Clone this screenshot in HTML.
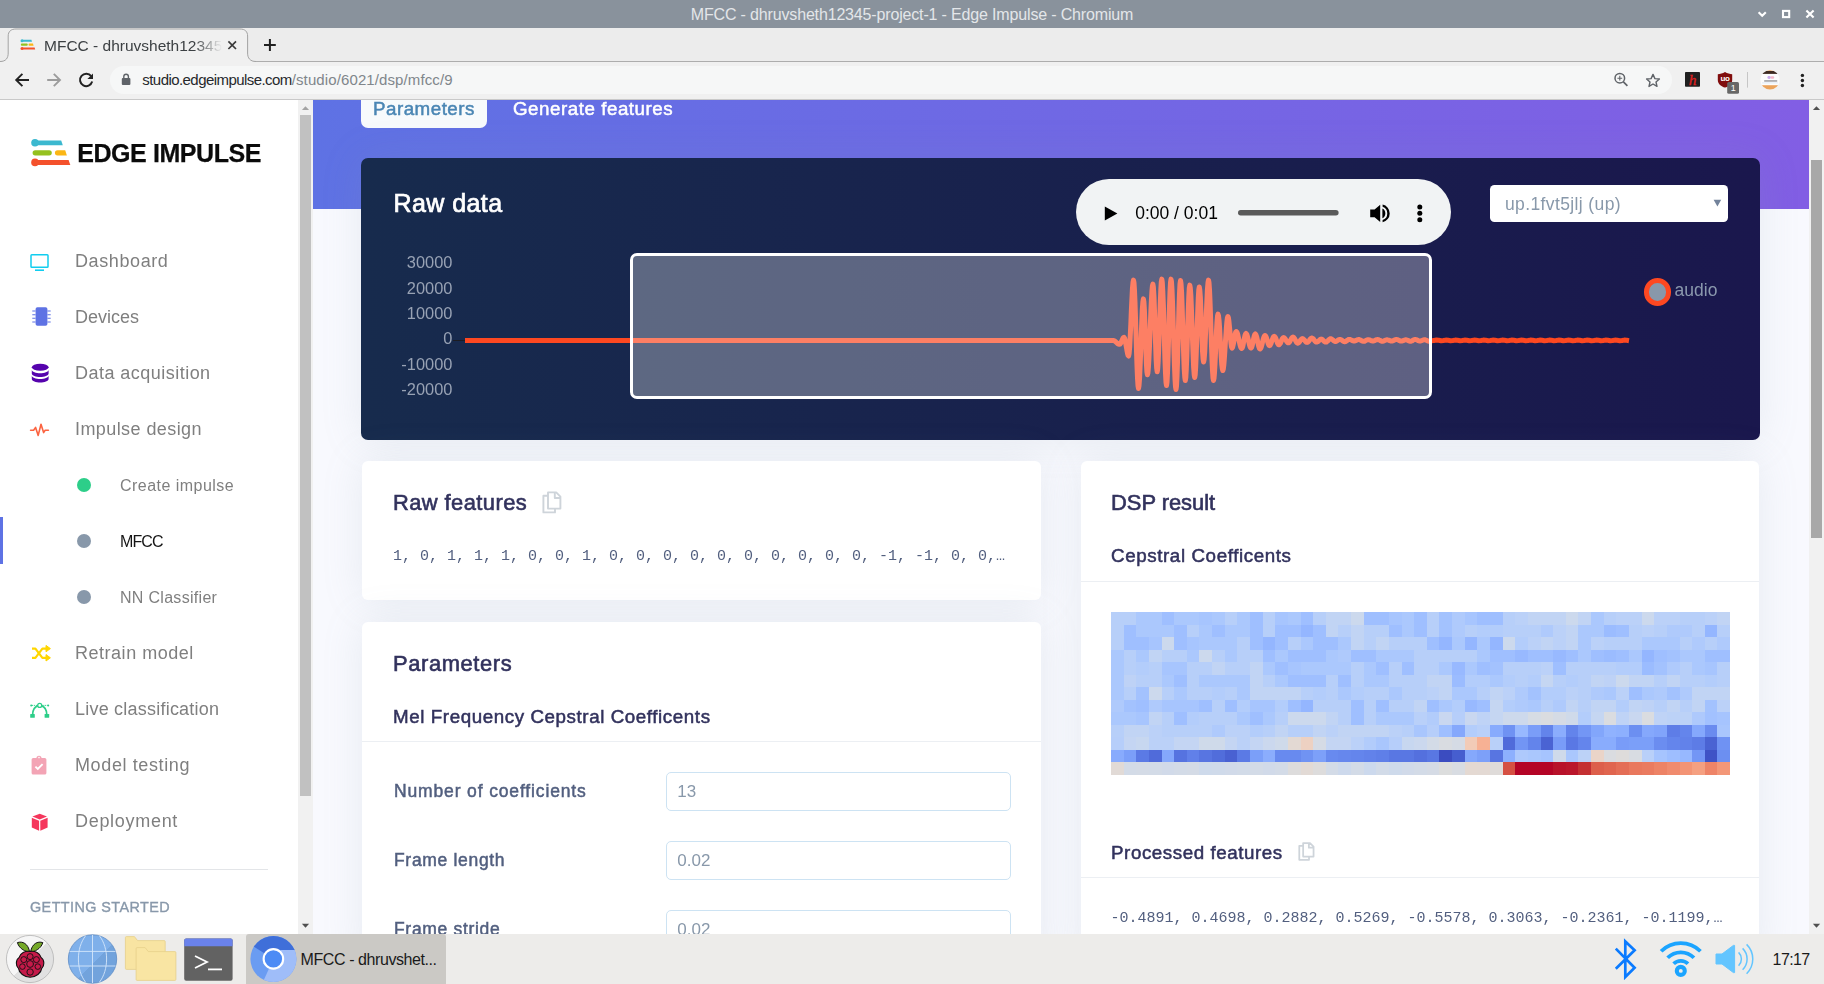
<!DOCTYPE html>
<html lang="en">
<head>
<meta charset="utf-8">
<title>MFCC - dhruvsheth12345-project-1 - Edge Impulse - Chromium</title>
<style>
*{box-sizing:border-box;margin:0;padding:0}
html,body{width:1824px;height:984px;overflow:hidden;background:#f4f5fa;font-family:"Liberation Sans",sans-serif;}
.abs{position:absolute}
#root{position:relative;width:1824px;height:984px;overflow:hidden}
/* ---------- window chrome ---------- */
#titlebar{left:0;top:0;width:1824px;height:28px;background:#89929c;color:#e3e6e9;font-size:16px;letter-spacing:-0.16px;line-height:29px;text-align:center}
#tabstrip{left:0;top:28px;width:1824px;height:34px;background:#ececec;border-bottom:1px solid #adadad}
#toolbar{left:0;top:62px;width:1824px;height:38px;background:#f0f0f0;border-bottom:1px solid #c9c9c9}
#urlpill{left:110px;top:66px;width:1562px;height:28px;border-radius:14px;background:#f6f7f7}
.chrometxt{font-size:16px;color:#3c4043;white-space:nowrap}
/* ---------- page ---------- */
#sidebar{left:0;top:100px;width:298px;height:834px;background:#fff;overflow:hidden}
#sidebar,#main{will-change:transform}
#sbscroll{left:298px;top:100px;width:15px;height:834px;background:#f1f1f1}
#main{left:313px;top:100px;width:1496px;height:834px;background:#f8f9fe;overflow:hidden}
#mainscroll{left:1809px;top:100px;width:15px;height:834px;background:#f1f1f1}
#hero{left:0;top:0;width:1496px;height:109px;background:linear-gradient(87deg,#5e72e4 0,#825ee4 100%)}
.os{font-family:"Liberation Sans",sans-serif}
.navitem{left:75px;font-size:18px;color:#7f7f7f;white-space:nowrap;line-height:22px}
.subitem{left:120px;font-size:16px;color:#7f7f7f;white-space:nowrap;line-height:20px}
.dot{left:77px;width:14px;height:14px;border-radius:50%;background:#8898aa}
.card{background:#fff;border-radius:6px;box-shadow:0 0 40px 0 rgba(136,152,170,.15)}
.h2{font-size:21.9px;color:#32325d;-webkit-text-stroke:0.62px #32325d;white-space:nowrap;line-height:26px}
.h3{font-size:18.75px;color:#32325d;-webkit-text-stroke:0.52px #32325d;white-space:nowrap;line-height:22px}
.mono{font-family:"Liberation Mono",monospace;font-size:15px;color:#525f7f;white-space:nowrap;line-height:18px}
.lbl{font-size:17.5px;font-weight:normal;color:#525f7f;-webkit-text-stroke:0.5px #525f7f;white-space:nowrap;line-height:22px}
.inp{width:344.6px;height:39px;border:1px solid #cde3f3;border-radius:5px;background:#fff;color:#8898aa;font-size:17px;line-height:37px;padding-left:10px}
.hr{height:1px;background:#eceff3}
.ylab{width:70px;text-align:right;font-size:16.4px;color:#98a2b4;line-height:18px}
/* ---------- taskbar ---------- */
#taskbar{left:0;top:934px;width:1824px;height:50px;background:#edecea}
</style>
</head>
<body>
<div id="root">

<!-- PAGE: SIDEBAR -->
<div id="sidebar" class="abs">
<!-- logo -->
<svg class="abs" style="left:28px;top:36px" width="46" height="34" viewBox="28 136 46 34">
  <path d="M35 140.4 H61.2 L62.8 145.2 H35 Z" fill="#3bb8cf"/><circle cx="35" cy="142.8" r="3.8" fill="#3bb8cf"/>
  <rect x="32.6" y="150.2" width="19.2" height="5.2" rx="2.6" fill="#95c11f"/>
  <path d="M57.5 150.2 H65.2 L66.9 155.4 H57.5 A2.6 2.6 0 0 1 57.5 150.2 Z" fill="#fbb615"/>
  <path d="M35 160 H68.6 L70.3 165 H35 Z" fill="#f4512c"/><circle cx="35" cy="162.4" r="3.8" fill="#f4512c"/>
</svg>
<div class="abs" style="left:77.2px;top:38.7px;font-size:25px;font-weight:bold;color:#0b0b0b;-webkit-text-stroke:0.25px #0b0b0b;letter-spacing:-0.42px;line-height:28px;white-space:nowrap">EDGE IMPULSE</div>

<!-- nav icons -->
<svg class="abs" style="left:28px;top:150px" width="26" height="24" viewBox="28 250 26 24" fill="none" stroke="#11cdef" stroke-width="1.5">
  <rect x="31" y="254.7" width="17" height="12.6" rx="0.8"/><path d="M35 270.2 H44" stroke-width="1.6"/>
</svg>
<svg class="abs" style="left:28px;top:204px" width="26" height="26" viewBox="28 304 26 26">
  <rect x="35.6" y="307.2" width="11.8" height="18.6" rx="1.8" fill="#5e72e4"/>
  <g stroke="#5e72e4" stroke-width="1.1"><path d="M32.3 311H35.6M32.3 314.7H35.6M32.3 318.3H35.6M32.3 322H35.6M47.4 311H50.7M47.4 314.7H50.7M47.4 318.3H50.7M47.4 322H50.7"/></g>
</svg>
<svg class="abs" style="left:28px;top:260px" width="26" height="26" viewBox="28 360 26 26" fill="#5603ad">
  <ellipse cx="40.2" cy="367.2" rx="8.4" ry="3.5"/>
  <path d="M31.8 369.8 C31.8 374.4 48.6 374.4 48.6 369.8 V373.6 C48.6 378.2 31.8 378.2 31.8 373.6 Z"/>
  <path d="M31.8 375.6 C31.8 380.2 48.6 380.2 48.6 375.6 V379 C48.6 383.6 31.8 383.6 31.8 379 Z"/>
</svg>
<svg class="abs" style="left:28px;top:318px" width="26" height="24" viewBox="28 418 26 24" fill="none" stroke="#fb6340" stroke-width="1.6" stroke-linejoin="round" stroke-linecap="round">
  <path d="M30.6 430.2 H33.6 L35.6 427.4 L38.2 435.4 L41 424.2 L43.6 432.6 L45.2 430.2 H48.4"/>
</svg>
<!-- retrain (shuffle) -->
<svg class="abs" style="left:28px;top:542px" width="26" height="24" viewBox="28 642 26 24" fill="none" stroke="#ffd600" stroke-width="2.2" stroke-linejoin="round">
  <path d="M32 648.6 H35.4 L42.4 657.8 H47"/><path d="M32 657.8 H35.4 L42.4 648.6 H47"/>
  <path d="M46 645.4 L50.4 648.6 L46 651.8 Z" fill="#ffd600" stroke-width="1"/><path d="M46 654.6 L50.4 657.8 L46 661 Z" fill="#ffd600" stroke-width="1"/>
</svg>
<!-- live (bezier) -->
<svg class="abs" style="left:28px;top:600px" width="26" height="24" viewBox="28 700 26 24" fill="none" stroke="#2dce89">
  <path d="M32.6 715 C32.6 709 35.6 706.4 38 705.6 M41.4 705.6 C43.8 706.4 46.8 709 46.8 715" stroke-width="1.7"/>
  <circle cx="39.7" cy="705.4" r="2" stroke-width="1.3"/>
  <rect x="30.2" y="714" width="4.6" height="3.8" rx="0.6" fill="#2dce89" stroke="none"/><rect x="44.6" y="714" width="4.6" height="3.8" rx="0.6" fill="#2dce89" stroke="none"/>
  <path d="M31.6 705.4 H37 M42.4 705.4 H47.8" stroke-width="0.9" stroke-dasharray="1.4 0.8"/>
  <circle cx="31.2" cy="705.4" r="1" fill="#2dce89" stroke="none"/><circle cx="48.2" cy="705.4" r="1" fill="#2dce89" stroke="none"/>
</svg>
<!-- model testing (clipboard check) -->
<svg class="abs" style="left:28px;top:652px" width="26" height="26" viewBox="28 752 26 26">
  <path d="M33.2 758 H44.8 A1.6 1.6 0 0 1 46.4 759.6 V773 A1.6 1.6 0 0 1 44.8 774.6 H33.2 A1.6 1.6 0 0 1 31.6 773 V759.6 A1.6 1.6 0 0 1 33.2 758 Z" fill="#f3a4b5"/>
  <path d="M36.4 758.4 A2.6 2.6 0 0 1 41.6 758.4 Z" fill="#f3a4b5"/><circle cx="39" cy="757.6" r="0.8" fill="#fff"/>
  <path d="M35.4 766.6 L37.8 769 L42.6 764.2" fill="none" stroke="#fff" stroke-width="1.9"/>
</svg>
<!-- deployment (cube) -->
<svg class="abs" style="left:28px;top:710px" width="26" height="26" viewBox="28 810 26 26" fill="#f5365c">
  <path d="M39.7 813.8 L47 816.6 L39.7 819.6 L32.4 816.6 Z"/>
  <path d="M31.8 817.8 L39.1 820.8 V830.8 L31.8 827.6 Z"/>
  <path d="M47.6 817.8 L40.3 820.8 V830.8 L47.6 827.6 Z"/>
</svg>

<div class="abs navitem" style="top:150px;letter-spacing:0.6px">Dashboard</div>
<div class="abs navitem" style="top:206px;letter-spacing:0px">Devices</div>
<div class="abs navitem" style="top:262px;letter-spacing:0.47px">Data acquisition</div>
<div class="abs navitem" style="top:318px;letter-spacing:0.42px">Impulse design</div>

<div class="abs dot" style="top:378px;background:#2dce89"></div>
<div class="abs subitem" style="top:376px;letter-spacing:0.47px">Create impulse</div>
<div class="abs" style="left:0;top:417px;width:3px;height:47px;background:#5e72e4"></div>
<div class="abs dot" style="top:434px"></div>
<div class="abs subitem" style="top:432px;color:#151515;letter-spacing:-0.9px">MFCC</div>
<div class="abs dot" style="top:490px"></div>
<div class="abs subitem" style="top:488px;letter-spacing:0.3px">NN Classifier</div>

<div class="abs navitem" style="top:542px;letter-spacing:0.52px">Retrain model</div>
<div class="abs navitem" style="top:597.6px;letter-spacing:0.22px">Live classification</div>
<div class="abs navitem" style="top:654px;letter-spacing:0.62px">Model testing</div>
<div class="abs navitem" style="top:710px;letter-spacing:0.7px">Deployment</div>

<div class="abs" style="left:30px;top:769px;width:238px;height:1px;background:#e3e5e8"></div>
<div class="abs" style="left:30px;top:798.6px;font-size:14.4px;color:#8898aa;-webkit-text-stroke:0.35px #8898aa;letter-spacing:0.42px;line-height:16px;white-space:nowrap">GETTING STARTED</div>
<!--SIDEBAR-END-->
</div>
<div id="sbscroll" class="abs">

<div class="abs" style="left:2px;top:15px;width:11px;height:681px;background:#c1c1c1"></div>
<svg class="abs" style="left:0;top:0" width="15" height="834" viewBox="0 0 15 834"><path d="M3.9 10 L7.5 6.2 L11.1 10 Z" fill="#a3a3a3"/><path d="M3.9 823.8 L7.5 827.8 L11.1 823.8 Z" fill="#505050"/></svg>

</div>

<!-- PAGE: MAIN -->
<div id="main" class="abs">
<div id="hero" class="abs"></div>

<!-- tabs -->
<div class="abs" style="left:48px;top:-8px;width:126px;height:36px;background:#f7fafc;border-radius:7px"></div>
<div class="abs" style="left:60px;top:-1.8px;font-size:18.75px;color:#4a86b4;-webkit-text-stroke:0.5px #4a86b4;letter-spacing:0.5px;line-height:22px;white-space:nowrap">Parameters</div>
<div class="abs" style="left:200px;top:-2px;font-size:18.75px;color:#fff;-webkit-text-stroke:0.5px #fff;letter-spacing:0.535px;line-height:22px;white-space:nowrap">Generate features</div>

<!-- raw data card -->
<div id="rawcard" class="abs" style="left:48px;top:58px;width:1399px;height:282px;border-radius:7px;background:linear-gradient(87deg,#172b4d 0,#1a174d 100%);overflow:hidden;box-shadow:0 0 40px 0 rgba(136,152,170,.15)">
  <div class="abs" style="left:32.5px;top:30px;font-size:25px;color:#fff;-webkit-text-stroke:0.7px #fff;letter-spacing:0.43px;line-height:30px;white-space:nowrap">Raw data</div>
  <!-- audio player -->
  <div class="abs" style="left:714.7px;top:21.2px;width:375.3px;height:66.3px;border-radius:34px;background:#f1f3f4"></div>
  <svg class="abs" style="left:714px;top:21px" width="377" height="67" viewBox="1075 179 377 67">
    <path d="M1104.8 206.6 L1117.4 213.4 L1104.8 220.4 Z" fill="#000"/>
    <rect x="1238" y="210" width="100.6" height="5.4" rx="2.7" fill="#5a5a5a"/>
    <path d="M1370.2 209.6 H1374.6 L1380.2 204.8 V222 L1374.6 217.2 H1370.2 Z" fill="#000"/>
    <path d="M1382.4 208.6 A5.4 5.4 0 0 1 1382.4 218.2 Z" fill="#000"/>
    <path d="M1382.6 204.6 A9 9 0 0 1 1382.6 222.2 V220 A7 7 0 0 0 1382.6 206.8 Z" fill="#000"/>
    <circle cx="1419.8" cy="206.9" r="2.5" fill="#000"/><circle cx="1419.8" cy="213.3" r="2.5" fill="#000"/><circle cx="1419.8" cy="219.7" r="2.5" fill="#000"/>
  </svg>
  <div class="abs" style="left:774.2px;top:44.7px;font-size:17.5px;color:#000;line-height:20px;white-space:nowrap">0:00 / 0:01</div>
  <!-- select -->
  <div class="abs" style="left:1128.9px;top:26.8px;width:238.2px;height:37.3px;border-radius:4.5px;background:#fff"></div>
  <div class="abs" style="left:1144px;top:35.8px;font-size:17.5px;color:#8898aa;letter-spacing:0.38px;line-height:20px;white-space:nowrap">up.1fvt5jlj (up)</div>
  <svg class="abs" style="left:1351px;top:40px" width="12" height="10" viewBox="0 0 12 10"><path d="M1.6 1.8 H9.2 L5.4 8.6 Z" fill="#73839b"/></svg>
  <!-- y labels -->
  <div class="abs ylab" style="left:21.4px;top:94.7px">30000</div>
  <div class="abs ylab" style="left:21.4px;top:120.5px">20000</div>
  <div class="abs ylab" style="left:21.4px;top:145.8px">10000</div>
  <div class="abs ylab" style="left:21.4px;top:170.5px">0</div>
  <div class="abs ylab" style="left:21.4px;top:196.7px">-10000</div>
  <div class="abs ylab" style="left:21.4px;top:221.7px">-20000</div>
  <div class="abs" style="left:92px;top:181.6px;width:12px;height:1.4px;background:#1c1c22"></div>
  <!-- waveform -->
  <svg class="abs" style="left:0;top:0" width="1399" height="282" viewBox="0 0 1399 282">
    <path d="M104.0,182.4 752.0,182.4 752.5,182.5 753.0,182.6 753.5,182.9 754.0,183.2 754.5,183.7 755.0,184.1 755.5,184.6 756.0,185.0 756.5,185.5 757.0,185.8 757.5,186.1 758.0,186.2 758.5,186.3 759.0,186.1 759.5,185.5 760.0,184.6 760.5,183.4 761.0,182.3 761.5,181.1 762.0,180.2 762.5,179.6 763.0,179.4 763.5,180.0 764.0,181.6 764.5,184.0 765.0,187.1 765.6,190.3 766.1,193.3 766.6,195.8 767.1,197.4 767.6,198.0 768.1,195.7 768.7,189.1 769.2,179.0 769.8,166.6 770.3,153.5 770.9,141.1 771.4,131.0 772.0,124.4 772.5,122.1 773.0,124.8 773.5,132.5 774.0,144.4 774.5,159.6 775.0,176.3 775.5,193.0 776.0,208.2 776.5,220.1 777.0,227.8 777.5,230.5 778.0,227.8 778.6,220.0 779.1,208.1 779.7,193.5 780.2,177.9 780.8,163.3 781.3,151.4 781.9,143.6 782.4,140.9 782.9,143.8 783.4,152.0 783.9,164.3 784.4,178.8 784.9,193.4 785.4,205.7 785.9,213.9 786.4,216.8 786.9,215.0 787.4,209.6 787.9,201.1 788.4,190.3 788.9,177.9 789.4,165.0 789.9,152.6 790.4,141.8 790.9,133.3 791.4,127.9 791.9,126.1 792.4,129.4 793.0,138.9 793.5,153.2 794.1,169.9 794.6,186.7 795.1,201.0 795.7,210.5 796.2,213.8 796.7,211.0 797.2,203.0 797.7,190.6 798.2,175.5 798.8,159.4 799.3,144.3 799.8,131.9 800.3,123.9 800.8,121.1 801.3,124.3 801.8,133.5 802.4,147.7 802.9,165.1 803.4,183.5 803.9,200.9 804.5,215.1 805.0,224.3 805.5,227.5 806.0,224.3 806.5,215.1 807.0,200.9 807.5,183.5 808.0,165.1 808.5,147.7 809.0,133.5 809.5,124.3 810.0,121.1 810.5,123.8 811.0,131.6 811.5,143.9 812.0,159.2 812.5,176.3 813.0,193.4 813.5,208.7 814.0,221.0 814.5,228.8 815.0,231.5 815.5,228.2 816.0,218.7 816.5,204.2 817.0,186.5 817.5,167.5 818.0,149.8 818.5,135.3 819.0,125.8 819.5,122.5 820.0,125.5 820.6,134.2 821.1,147.5 821.6,163.8 822.2,181.2 822.7,197.5 823.2,210.8 823.8,219.5 824.3,222.5 824.8,219.6 825.3,211.3 825.8,198.7 826.3,183.1 826.8,166.5 827.3,151.0 827.8,138.3 828.3,130.0 828.8,127.1 829.3,129.9 829.9,137.9 830.4,150.2 831.0,165.3 831.5,181.3 832.1,196.4 832.6,208.7 833.2,216.7 833.7,219.5 834.2,216.8 834.7,208.9 835.2,196.9 835.7,182.1 836.3,166.4 836.8,151.6 837.3,139.6 837.8,131.7 838.3,129.0 838.8,131.9 839.4,140.0 839.9,152.1 840.4,166.5 841.0,180.9 841.5,193.0 842.1,201.1 842.6,204.0 843.1,201.5 843.7,194.4 844.2,183.5 844.8,170.2 845.3,155.9 845.9,142.6 846.4,131.7 847.0,124.6 847.5,122.1 848.0,124.6 848.5,131.7 849.0,142.8 849.5,156.8 850.0,172.3 850.5,187.8 851.0,201.8 851.5,212.9 852.0,220.0 852.5,222.5 853.0,220.5 853.5,214.7 854.0,205.9 854.5,195.1 855.0,183.5 855.5,172.7 856.0,163.9 856.5,158.1 857.0,156.1 857.5,157.8 858.1,162.7 858.6,170.2 859.1,179.4 859.7,189.2 860.2,198.4 860.7,205.9 861.3,210.8 861.8,212.5 862.3,211.2 862.8,207.3 863.3,201.4 863.8,193.8 864.3,185.5 864.9,177.2 865.4,169.6 865.9,163.7 866.4,159.8 866.9,158.5 867.4,159.7 867.9,163.1 868.4,168.3 869.0,174.3 869.5,180.3 870.0,185.5 870.5,188.9 871.0,190.1 871.5,189.5 872.0,187.7 872.6,185.0 873.1,181.8 873.6,178.6 874.2,175.9 874.7,174.1 875.2,173.5 875.7,173.8 876.2,174.8 876.7,176.4 877.2,178.5 877.7,180.8 878.2,183.2 878.7,185.5 879.2,187.6 879.7,189.2 880.2,190.2 880.7,190.5 881.2,189.9 881.8,188.3 882.3,185.9 882.8,183.0 883.4,180.1 883.9,177.7 884.5,176.1 885.0,175.5 885.5,175.9 886.0,176.9 886.5,178.5 887.0,180.5 887.5,182.8 888.0,185.0 888.5,187.0 889.0,188.6 889.5,189.6 890.0,190.0 890.5,189.5 891.1,187.9 891.6,185.7 892.2,183.0 892.7,180.3 893.2,178.1 893.8,176.5 894.3,176.0 894.8,176.5 895.3,177.8 895.9,179.8 896.4,182.2 896.9,184.8 897.4,187.2 898.0,189.2 898.5,190.5 899.0,191.0 899.5,190.7 900.0,189.7 900.5,188.2 901.0,186.3 901.5,184.2 902.0,182.2 902.5,180.3 903.0,178.8 903.5,177.8 904.0,177.5 904.5,177.8 905.0,178.7 905.5,180.0 906.0,181.7 906.5,183.4 907.0,185.1 907.5,186.4 908.0,187.3 908.5,187.6 909.0,187.3 909.5,186.5 910.1,185.3 910.6,183.8 911.1,182.2 911.6,180.7 912.2,179.4 912.7,178.6 913.2,178.3 913.7,178.6 914.2,179.3 914.8,180.4 915.3,181.8 915.8,183.3 916.3,184.7 916.9,185.8 917.4,186.5 917.9,186.8 918.4,186.5 918.9,185.9 919.5,185.0 920.0,183.8 920.5,182.5 921.0,181.4 921.6,180.4 922.1,179.8 922.6,179.6 923.1,179.7 923.6,180.2 924.2,180.9 924.7,181.7 925.2,182.7 925.7,183.5 926.3,184.2 926.8,184.7 927.3,184.8 927.8,184.7 928.3,184.2 928.9,183.4 929.4,182.5 929.9,181.5 930.4,180.6 931.0,179.8 931.5,179.3 932.0,179.1 932.5,179.3 933.0,179.8 933.6,180.7 934.1,181.6 934.6,182.7 935.1,183.7 935.7,184.5 936.2,185.0 936.7,185.2 937.2,185.1 937.7,184.7 938.3,184.1 938.8,183.3 939.3,182.5 939.8,181.8 940.4,181.2 940.9,180.8 941.4,180.6 941.9,180.7 942.4,181.1 943.0,181.6 943.5,182.2 944.0,182.9 944.5,183.5 945.1,184.0 945.6,184.3 946.1,184.4 946.6,184.3 947.1,183.9 947.7,183.3 948.2,182.6 948.7,181.8 949.2,181.1 949.8,180.5 950.3,180.1 950.8,180.0 951.3,180.1 951.8,180.5 952.4,181.0 952.9,181.7 953.4,182.4 953.9,183.1 954.5,183.6 955.0,184.0 955.5,184.1 956.0,184.0 956.5,183.8 957.1,183.4 957.6,182.9 958.1,182.4 958.6,181.9 959.2,181.5 959.7,181.2 960.2,181.1 960.7,181.2 961.2,181.5 961.8,181.9 962.3,182.4 962.8,182.9 963.3,183.4 963.9,183.7 964.4,184.0 964.9,184.1 965.4,184.0 965.9,183.7 966.5,183.2 967.0,182.7 967.5,182.1 968.0,181.6 968.6,181.1 969.1,180.8 969.6,180.7 970.1,180.8 970.6,181.1 971.2,181.4 971.7,181.9 972.2,182.3 972.7,182.8 973.3,183.1 973.8,183.4 974.3,183.4 974.8,183.4 975.3,183.2 975.9,182.9 976.4,182.6 976.9,182.2 977.4,181.9 978.0,181.6 978.5,181.5 979.0,181.4 979.5,181.5 980.0,181.7 980.6,182.0 981.1,182.4 981.6,182.8 982.1,183.1 982.7,183.4 983.2,183.6 983.7,183.7 984.2,183.6 984.7,183.4 985.3,183.1 985.8,182.7 986.3,182.3 986.8,181.9 987.4,181.6 987.9,181.4 988.4,181.4 988.9,181.4 989.4,181.6 990.0,181.8 990.5,182.1 991.0,182.4 991.5,182.6 992.1,182.9 992.6,183.0 993.1,183.1 993.6,183.0 994.1,182.9 994.7,182.7 995.2,182.4 995.7,182.2 996.2,181.9 996.8,181.7 997.3,181.6 997.8,181.6 998.3,181.6 998.8,181.8 999.4,182.0 999.9,182.3 1000.4,182.6 1000.9,182.9 1001.5,183.1 1002.0,183.3 1002.5,183.3 1003.0,183.3 1003.5,183.2 1004.1,182.9 1004.6,182.7 1005.1,182.4 1005.6,182.1 1006.2,181.9 1006.7,181.8 1007.2,181.7 1007.7,181.8 1008.2,181.9 1008.8,182.0 1009.3,182.3 1009.8,182.5 1010.3,182.7 1010.9,182.8 1011.4,183.0 1011.9,183.0 1012.4,183.0 1012.9,182.8 1013.5,182.6 1014.0,182.4 1014.5,182.1 1015.0,181.9 1015.6,181.7 1016.1,181.6 1016.6,181.5 1017.1,181.6 1017.6,181.7 1018.2,182.0 1018.7,182.2 1019.2,182.5 1019.7,182.8 1020.3,183.1 1020.8,183.2 1021.3,183.3 1021.8,183.2 1022.3,183.1 1022.9,182.9 1023.4,182.7 1023.9,182.4 1024.4,182.2 1025.0,182.0 1025.5,181.9 1026.0,181.8 1026.5,181.9 1027.0,182.0 1027.6,182.1 1028.1,182.3 1028.6,182.6 1029.1,182.8 1029.7,182.9 1030.2,183.1 1030.7,183.1 1031.2,183.0 1031.7,182.9 1032.3,182.7 1032.8,182.4 1033.3,182.1 1033.8,181.9 1034.4,181.7 1034.9,181.5 1035.4,181.5 1035.9,181.5 1036.4,181.7 1037.0,181.9 1037.5,182.2 1038.0,182.4 1038.5,182.7 1039.1,182.9 1039.6,183.1 1040.1,183.1 1040.6,183.1 1041.1,183.0 1041.7,182.8 1042.2,182.6 1042.7,182.4 1043.2,182.2 1043.8,182.0 1044.3,181.9 1044.8,181.8 1045.3,181.9 1045.8,182.0 1046.4,182.2 1046.9,182.4 1047.4,182.6 1047.9,182.9 1048.5,183.1 1049.0,183.2 1049.5,183.2 1050.0,183.2 1050.5,183.0 1051.1,182.8 1051.6,182.5 1052.1,182.2 1052.6,181.9 1053.2,181.7 1053.7,181.5 1054.2,181.5 1054.7,181.5 1055.2,181.7 1055.8,181.9 1056.3,182.1 1056.8,182.4 1057.3,182.6 1057.9,182.8 1058.4,183.0 1058.9,183.0 1059.4,183.0 1059.9,182.9 1060.5,182.7 1061.0,182.5 1061.5,182.3 1062.0,182.1 1062.6,181.9 1063.1,181.8 1063.6,181.8 1064.1,181.8 1064.6,181.9 1065.2,182.2 1065.7,182.4 1066.2,182.7 1066.7,182.9 1067.3,183.1 1067.8,183.3 1068.3,183.3 1068.8,183.3 1069.3,183.2 1069.9,183.1 1070.4,182.9 1070.9,182.8 1071.4,182.6 1072.0,182.5 1072.5,182.4 1073.0,182.4 1075.4,182.1 1077.7,182.3 1080.1,182.7 1082.4,182.5 1084.8,182.1 1087.1,182.3 1089.5,182.7 1091.8,182.5 1094.2,182.1 1096.5,182.3 1098.9,182.7 1101.2,182.5 1103.6,182.1 1105.9,182.3 1108.3,182.7 1110.6,182.5 1113.0,182.1 1115.3,182.3 1117.6,182.7 1120.0,182.5 1122.3,182.1 1124.7,182.3 1127.0,182.7 1129.4,182.5 1131.7,182.1 1134.1,182.3 1136.4,182.7 1138.8,182.5 1141.1,182.1 1143.5,182.3 1145.8,182.7 1148.2,182.5 1150.5,182.1 1152.9,182.3 1155.2,182.7 1157.6,182.5 1159.9,182.1 1162.3,182.3 1164.6,182.7 1167.0,182.5 1169.3,182.1 1171.7,182.3 1174.0,182.7 1176.4,182.5 1178.7,182.1 1181.1,182.3 1183.4,182.7 1185.8,182.5 1188.1,182.1 1190.5,182.3 1192.8,182.7 1195.2,182.5 1197.5,182.1 1199.9,182.3 1202.2,182.7 1204.6,182.5 1206.9,182.1 1209.3,182.3 1211.6,182.7 1214.0,182.5 1216.3,182.1 1218.7,182.3 1221.0,182.7 1223.4,182.5 1225.7,182.1 1228.1,182.3 1230.4,182.7 1232.8,182.5 1235.1,182.1 1237.5,182.3 1239.8,182.7 1242.2,182.5 1244.5,182.1 1246.9,182.3 1249.2,182.7 1251.6,182.5 1253.9,182.1 1256.3,182.3 1258.6,182.7 1261.0,182.5 1263.3,182.1 1265.7,182.3 1268.0,182.7" fill="none" stroke="#fd4821" stroke-width="5" stroke-linejoin="round"/>
  </svg>
  <!-- selection -->
  <div class="abs" style="left:269px;top:95px;width:802px;height:146px;border:3.4px solid #fff;border-radius:7px;background:rgba(255,255,255,.3)"></div>
  <!-- legend -->
  <div class="abs" style="left:1282.7px;top:120.3px;width:27.6px;height:27.6px;border-radius:50%;border:5.4px solid #fd4821;background:#8898aa"></div>
  <div class="abs" style="left:1313.4px;top:122px;font-size:17.5px;color:#8b99ae;line-height:20px;letter-spacing:0.05px;white-space:nowrap">audio</div>
</div>

<!-- raw features card -->
<div class="abs card" style="left:49px;top:361px;width:679px;height:139px">
  <div class="abs h2" style="left:31.3px;top:128px"></div>
</div>
<div class="abs h2" style="left:80px;top:390.1px;letter-spacing:0.43px">Raw features</div>
<svg class="abs copyic" style="left:228.4px;top:390px" width="22" height="25" viewBox="0 0 22 25" fill="none" stroke="#ced4da" stroke-width="1.9" stroke-linejoin="round">
  <path d="M7 5.6 V2.4 H15.2 L19.4 6.6 V18.6 H7 V5.6 M13.8 2.6 V8 H19.2"/><path d="M7 5.8 H2.4 V22.4 H14 V18.8"/>
</svg>
<div class="abs mono" style="left:80px;top:448px">1, 0, 1, 1, 1, 0, 0, 1, 0, 0, 0, 0, 0, 0, 0, 0, 0, 0, -1, -1, 0, 0,…</div>

<!-- parameters card -->
<div class="abs card" style="left:49px;top:521.7px;width:679px;height:340px;border-bottom-left-radius:0;border-bottom-right-radius:0"></div>
<div class="abs h2" style="left:80px;top:550.6px;letter-spacing:0.62px">Parameters</div>
<div class="abs h3" style="left:80px;top:606px;letter-spacing:0.585px">Mel Frequency Cepstral Coefficents</div>
<div class="abs hr" style="left:49px;top:640.5px;width:679px"></div>
<div class="abs lbl" style="left:81px;top:680px;letter-spacing:0.857px">Number of coefficients</div>
<div class="abs inp" style="left:353.3px;top:672.2px">13</div>
<div class="abs lbl" style="left:81px;top:749px;letter-spacing:0.68px">Frame length</div>
<div class="abs inp" style="left:353.3px;top:741.2px">0.02</div>
<div class="abs lbl" style="left:81px;top:818px;letter-spacing:0.68px">Frame stride</div>
<div class="abs inp" style="left:353.3px;top:810.2px">0.02</div>

<!-- dsp card -->
<div class="abs card" style="left:768px;top:361px;width:678px;height:500px;border-bottom-left-radius:0;border-bottom-right-radius:0"></div>
<div class="abs h2" style="left:798px;top:390px;letter-spacing:-0.01px">DSP result</div>
<div class="abs h3" style="left:798px;top:445.3px;letter-spacing:0.605px">Cepstral Coefficents</div>
<div class="abs hr" style="left:768px;top:481px;width:678px"></div>
<svg class="abs" style="left:798px;top:512px" width="619" height="163" viewBox="0 0 619 163" shape-rendering="crispEdges">
<g transform="translate(0 0)">
<rect x="0" width="25.6" height="12.84" fill="#b7cff9"/><rect x="25.3" width="25.5" height="12.84" fill="#abc8fd"/><rect x="50.5" width="13" height="12.84" fill="#9fbfff"/><rect x="63.2" width="25.5" height="12.84" fill="#abc8fd"/><rect x="88.4" width="13" height="12.84" fill="#a7c5fe"/><rect x="101.1" width="12.9" height="12.84" fill="#abc8fd"/><rect x="113.7" width="12.9" height="12.84" fill="#b7cff9"/><rect x="126.3" width="13" height="12.84" fill="#abc8fd"/><rect x="139" width="12.9" height="12.84" fill="#9fbfff"/><rect x="151.6" width="12.9" height="12.84" fill="#b7cff9"/><rect x="164.2" width="13" height="12.84" fill="#a7c5fe"/><rect x="176.9" width="12.9" height="12.84" fill="#abc8fd"/><rect x="189.5" width="12.9" height="12.84" fill="#9fbfff"/><rect x="202.1" width="13" height="12.84" fill="#b7cff9"/><rect x="214.8" width="25.5" height="12.84" fill="#c1d4f4"/><rect x="240" width="13" height="12.84" fill="#ccd9ed"/><rect x="252.7" width="25.5" height="12.84" fill="#9fbfff"/><rect x="277.9" width="13" height="12.84" fill="#a7c5fe"/><rect x="290.6" width="12.9" height="12.84" fill="#abc8fd"/><rect x="303.2" width="12.9" height="12.84" fill="#9fbfff"/><rect x="315.8" width="12.9" height="12.84" fill="#b7cff9"/><rect x="328.4" width="13" height="12.84" fill="#a3c2fe"/><rect x="341.1" width="12.9" height="12.84" fill="#afcafc"/><rect x="353.7" width="12.9" height="12.84" fill="#a7c5fe"/><rect x="366.3" width="25.6" height="12.84" fill="#9fbfff"/><rect x="391.6" width="12.9" height="12.84" fill="#b7cff9"/><rect x="404.2" width="13" height="12.84" fill="#bbd1f8"/><rect x="416.9" width="38.2" height="12.84" fill="#c1d4f4"/><rect x="454.8" width="12.9" height="12.84" fill="#ccd9ed"/><rect x="467.4" width="12.9" height="12.84" fill="#c1d4f4"/><rect x="480" width="13" height="12.84" fill="#abc8fd"/><rect x="492.7" width="12.9" height="12.84" fill="#b7cff9"/><rect x="505.3" width="25.6" height="12.84" fill="#bbd1f8"/><rect x="530.6" width="12.9" height="12.84" fill="#ccd9ed"/><rect x="543.2" width="25.6" height="12.84" fill="#bbd1f8"/><rect x="568.5" width="25.5" height="12.84" fill="#b7cff9"/><rect x="593.7" width="13" height="12.84" fill="#bbd1f8"/><rect x="606.4" width="12.9" height="12.84" fill="#c1d4f4"/></g>
<g transform="translate(0 12.54)">
<rect x="0" width="12.9" height="12.84" fill="#b7cff9"/><rect x="12.6" width="13" height="12.84" fill="#9fbfff"/><rect x="25.3" width="38.2" height="12.84" fill="#abc8fd"/><rect x="63.2" width="12.9" height="12.84" fill="#9fbfff"/><rect x="75.8" width="12.9" height="12.84" fill="#b7cff9"/><rect x="88.4" width="13" height="12.84" fill="#abc8fd"/><rect x="101.1" width="12.9" height="12.84" fill="#9fbfff"/><rect x="113.7" width="25.6" height="12.84" fill="#abc8fd"/><rect x="139" width="12.9" height="12.84" fill="#9fbfff"/><rect x="151.6" width="12.9" height="12.84" fill="#b7cff9"/><rect x="164.2" width="25.6" height="12.84" fill="#9fbfff"/><rect x="189.5" width="12.9" height="12.84" fill="#94b6ff"/><rect x="202.1" width="13" height="12.84" fill="#9fbfff"/><rect x="214.8" width="12.9" height="12.84" fill="#c1d4f4"/><rect x="227.4" width="12.9" height="12.84" fill="#b7cff9"/><rect x="240" width="13" height="12.84" fill="#c1d4f4"/><rect x="252.7" width="25.5" height="12.84" fill="#b7cff9"/><rect x="277.9" width="13" height="12.84" fill="#9fbfff"/><rect x="290.6" width="12.9" height="12.84" fill="#abc8fd"/><rect x="303.2" width="12.9" height="12.84" fill="#9fbfff"/><rect x="315.8" width="12.9" height="12.84" fill="#b7cff9"/><rect x="328.4" width="13" height="12.84" fill="#a3c2fe"/><rect x="341.1" width="12.9" height="12.84" fill="#afcafc"/><rect x="353.7" width="12.9" height="12.84" fill="#b7cff9"/><rect x="366.3" width="25.6" height="12.84" fill="#b3cdfb"/><rect x="391.6" width="38.2" height="12.84" fill="#b7cff9"/><rect x="429.5" width="12.9" height="12.84" fill="#afcafc"/><rect x="442.1" width="13" height="12.84" fill="#bbd1f8"/><rect x="454.8" width="12.9" height="12.84" fill="#c1d4f4"/><rect x="467.4" width="25.6" height="12.84" fill="#abc8fd"/><rect x="492.7" width="12.9" height="12.84" fill="#9bbcff"/><rect x="505.3" width="12.9" height="12.84" fill="#9fbfff"/><rect x="517.9" width="13" height="12.84" fill="#b7cff9"/><rect x="530.6" width="12.9" height="12.84" fill="#bbd1f8"/><rect x="543.2" width="12.9" height="12.84" fill="#b7cff9"/><rect x="555.8" width="25.6" height="12.84" fill="#afcafc"/><rect x="581.1" width="12.9" height="12.84" fill="#b7cff9"/><rect x="593.7" width="13" height="12.84" fill="#94b6ff"/><rect x="606.4" width="12.9" height="12.84" fill="#b7cff9"/></g>
<g transform="translate(0 25.08)">
<rect x="0" width="12.9" height="12.84" fill="#b7cff9"/><rect x="12.6" width="25.6" height="12.84" fill="#9fbfff"/><rect x="37.9" width="12.9" height="12.84" fill="#a7c5fe"/><rect x="50.5" width="13" height="12.84" fill="#ccd9ed"/><rect x="63.2" width="12.9" height="12.84" fill="#9fbfff"/><rect x="75.8" width="12.9" height="12.84" fill="#a7c5fe"/><rect x="88.4" width="38.2" height="12.84" fill="#abc8fd"/><rect x="126.3" width="13" height="12.84" fill="#b7cff9"/><rect x="139" width="12.9" height="12.84" fill="#9fbfff"/><rect x="151.6" width="12.9" height="12.84" fill="#94b6ff"/><rect x="164.2" width="13" height="12.84" fill="#9fbfff"/><rect x="176.9" width="12.9" height="12.84" fill="#b7cff9"/><rect x="189.5" width="12.9" height="12.84" fill="#abc8fd"/><rect x="202.1" width="25.6" height="12.84" fill="#9fbfff"/><rect x="227.4" width="12.9" height="12.84" fill="#abc8fd"/><rect x="240" width="13" height="12.84" fill="#c1d4f4"/><rect x="252.7" width="12.9" height="12.84" fill="#b7cff9"/><rect x="265.3" width="12.9" height="12.84" fill="#c1d4f4"/><rect x="277.9" width="38.2" height="12.84" fill="#b7cff9"/><rect x="315.8" width="12.9" height="12.84" fill="#9fbfff"/><rect x="328.4" width="13" height="12.84" fill="#94b6ff"/><rect x="341.1" width="12.9" height="12.84" fill="#abc8fd"/><rect x="353.7" width="12.9" height="12.84" fill="#94b6ff"/><rect x="366.3" width="13" height="12.84" fill="#abc8fd"/><rect x="379" width="12.9" height="12.84" fill="#94b6ff"/><rect x="391.6" width="12.9" height="12.84" fill="#ccd9ed"/><rect x="404.2" width="13" height="12.84" fill="#b3cdfb"/><rect x="416.9" width="12.9" height="12.84" fill="#bbd1f8"/><rect x="429.5" width="12.9" height="12.84" fill="#c1d4f4"/><rect x="442.1" width="13" height="12.84" fill="#bbd1f8"/><rect x="454.8" width="12.9" height="12.84" fill="#c1d4f4"/><rect x="467.4" width="12.9" height="12.84" fill="#abc8fd"/><rect x="480" width="13" height="12.84" fill="#bbd1f8"/><rect x="492.7" width="38.2" height="12.84" fill="#b7cff9"/><rect x="530.6" width="38.2" height="12.84" fill="#abc8fd"/><rect x="568.5" width="12.9" height="12.84" fill="#b7cff9"/><rect x="581.1" width="12.9" height="12.84" fill="#afcafc"/><rect x="593.7" width="13" height="12.84" fill="#b7cff9"/><rect x="606.4" width="12.9" height="12.84" fill="#afcafc"/></g>
<g transform="translate(0 37.62)">
<rect x="0" width="12.9" height="12.83" fill="#abc8fd"/><rect x="12.6" width="13" height="12.83" fill="#b7cff9"/><rect x="25.3" width="12.9" height="12.83" fill="#abc8fd"/><rect x="37.9" width="12.9" height="12.83" fill="#c1d4f4"/><rect x="50.5" width="25.6" height="12.83" fill="#b7cff9"/><rect x="75.8" width="12.9" height="12.83" fill="#abc8fd"/><rect x="88.4" width="13" height="12.83" fill="#ccd9ed"/><rect x="101.1" width="12.9" height="12.83" fill="#b7cff9"/><rect x="113.7" width="12.9" height="12.83" fill="#abc8fd"/><rect x="126.3" width="25.6" height="12.83" fill="#b7cff9"/><rect x="151.6" width="12.9" height="12.83" fill="#9fbfff"/><rect x="164.2" width="13" height="12.83" fill="#abc8fd"/><rect x="176.9" width="38.2" height="12.83" fill="#9fbfff"/><rect x="214.8" width="12.9" height="12.83" fill="#abc8fd"/><rect x="227.4" width="12.9" height="12.83" fill="#afcafc"/><rect x="240" width="25.6" height="12.83" fill="#9fbfff"/><rect x="265.3" width="38.2" height="12.83" fill="#abc8fd"/><rect x="303.2" width="63.4" height="12.83" fill="#b7cff9"/><rect x="366.3" width="13" height="12.83" fill="#abc8fd"/><rect x="379" width="25.5" height="12.83" fill="#9fbfff"/><rect x="404.2" width="13" height="12.83" fill="#98b9ff"/><rect x="416.9" width="25.5" height="12.83" fill="#9fbfff"/><rect x="442.1" width="13" height="12.83" fill="#98b9ff"/><rect x="454.8" width="12.9" height="12.83" fill="#9fbfff"/><rect x="467.4" width="12.9" height="12.83" fill="#abc8fd"/><rect x="480" width="13" height="12.83" fill="#9fbfff"/><rect x="492.7" width="12.9" height="12.83" fill="#9bbcff"/><rect x="505.3" width="12.9" height="12.83" fill="#9fbfff"/><rect x="517.9" width="13" height="12.83" fill="#abc8fd"/><rect x="530.6" width="12.9" height="12.83" fill="#94b6ff"/><rect x="543.2" width="12.9" height="12.83" fill="#9fbfff"/><rect x="555.8" width="13" height="12.83" fill="#a3c2fe"/><rect x="568.5" width="25.5" height="12.83" fill="#abc8fd"/><rect x="593.7" width="25.6" height="12.83" fill="#9fbfff"/></g>
<g transform="translate(0 50.15)">
<rect x="0" width="12.9" height="12.84" fill="#abc8fd"/><rect x="12.6" width="13" height="12.84" fill="#b7cff9"/><rect x="25.3" width="12.9" height="12.84" fill="#b3cdfb"/><rect x="37.9" width="12.9" height="12.84" fill="#b7cff9"/><rect x="50.5" width="25.6" height="12.84" fill="#a7c5fe"/><rect x="75.8" width="25.6" height="12.84" fill="#b7cff9"/><rect x="101.1" width="12.9" height="12.84" fill="#c1d4f4"/><rect x="113.7" width="25.6" height="12.84" fill="#b7cff9"/><rect x="139" width="12.9" height="12.84" fill="#c1d4f4"/><rect x="151.6" width="12.9" height="12.84" fill="#abc8fd"/><rect x="164.2" width="13" height="12.84" fill="#9fbfff"/><rect x="176.9" width="12.9" height="12.84" fill="#a7c5fe"/><rect x="189.5" width="50.8" height="12.84" fill="#abc8fd"/><rect x="240" width="13" height="12.84" fill="#b7cff9"/><rect x="252.7" width="12.9" height="12.84" fill="#abc8fd"/><rect x="265.3" width="12.9" height="12.84" fill="#9fbfff"/><rect x="277.9" width="13" height="12.84" fill="#b7cff9"/><rect x="290.6" width="12.9" height="12.84" fill="#9fbfff"/><rect x="303.2" width="25.5" height="12.84" fill="#b7cff9"/><rect x="328.4" width="13" height="12.84" fill="#abc8fd"/><rect x="341.1" width="12.9" height="12.84" fill="#98b9ff"/><rect x="353.7" width="12.9" height="12.84" fill="#abc8fd"/><rect x="366.3" width="13" height="12.84" fill="#9fbfff"/><rect x="379" width="12.9" height="12.84" fill="#a3c2fe"/><rect x="391.6" width="38.2" height="12.84" fill="#b7cff9"/><rect x="429.5" width="12.9" height="12.84" fill="#bbd1f8"/><rect x="442.1" width="13" height="12.84" fill="#9fbfff"/><rect x="454.8" width="50.8" height="12.84" fill="#b7cff9"/><rect x="505.3" width="25.6" height="12.84" fill="#b3cdfb"/><rect x="530.6" width="12.9" height="12.84" fill="#9bbcff"/><rect x="543.2" width="12.9" height="12.84" fill="#a3c2fe"/><rect x="555.8" width="13" height="12.84" fill="#afcafc"/><rect x="568.5" width="12.9" height="12.84" fill="#b7cff9"/><rect x="581.1" width="12.9" height="12.84" fill="#abc8fd"/><rect x="593.7" width="13" height="12.84" fill="#a7c5fe"/><rect x="606.4" width="12.9" height="12.84" fill="#b7cff9"/></g>
<g transform="translate(0 62.69)">
<rect x="0" width="12.9" height="12.84" fill="#abc8fd"/><rect x="12.6" width="13" height="12.84" fill="#bed2f6"/><rect x="25.3" width="25.5" height="12.84" fill="#b7cff9"/><rect x="50.5" width="13" height="12.84" fill="#abc8fd"/><rect x="63.2" width="12.9" height="12.84" fill="#9fbfff"/><rect x="75.8" width="12.9" height="12.84" fill="#b7cff9"/><rect x="88.4" width="50.9" height="12.84" fill="#abc8fd"/><rect x="139" width="12.9" height="12.84" fill="#c1d4f4"/><rect x="151.6" width="12.9" height="12.84" fill="#b7cff9"/><rect x="164.2" width="13" height="12.84" fill="#abc8fd"/><rect x="176.9" width="38.2" height="12.84" fill="#9fbfff"/><rect x="214.8" width="12.9" height="12.84" fill="#b7cff9"/><rect x="227.4" width="12.9" height="12.84" fill="#9fbfff"/><rect x="240" width="13" height="12.84" fill="#b7cff9"/><rect x="252.7" width="25.5" height="12.84" fill="#abc8fd"/><rect x="277.9" width="38.2" height="12.84" fill="#b7cff9"/><rect x="315.8" width="25.6" height="12.84" fill="#c1d4f4"/><rect x="341.1" width="12.9" height="12.84" fill="#9bbcff"/><rect x="353.7" width="25.6" height="12.84" fill="#b3cdfb"/><rect x="379" width="12.9" height="12.84" fill="#abc8fd"/><rect x="391.6" width="12.9" height="12.84" fill="#b3cdfb"/><rect x="404.2" width="13" height="12.84" fill="#b7cff9"/><rect x="416.9" width="12.9" height="12.84" fill="#b3cdfb"/><rect x="429.5" width="12.9" height="12.84" fill="#c5d6f2"/><rect x="442.1" width="13" height="12.84" fill="#b7cff9"/><rect x="454.8" width="12.9" height="12.84" fill="#b3cdfb"/><rect x="467.4" width="12.9" height="12.84" fill="#b7cff9"/><rect x="480" width="13" height="12.84" fill="#c1d4f4"/><rect x="492.7" width="12.9" height="12.84" fill="#bed2f6"/><rect x="505.3" width="12.9" height="12.84" fill="#ccd9ed"/><rect x="517.9" width="25.6" height="12.84" fill="#c1d4f4"/><rect x="543.2" width="12.9" height="12.84" fill="#b7cff9"/><rect x="555.8" width="13" height="12.84" fill="#c1d4f4"/><rect x="568.5" width="25.5" height="12.84" fill="#b7cff9"/><rect x="593.7" width="13" height="12.84" fill="#b3cdfb"/><rect x="606.4" width="12.9" height="12.84" fill="#b7cff9"/></g>
<g transform="translate(0 75.23)">
<rect x="0" width="12.9" height="12.84" fill="#abc8fd"/><rect x="12.6" width="13" height="12.84" fill="#b7cff9"/><rect x="25.3" width="12.9" height="12.84" fill="#a3c2fe"/><rect x="37.9" width="12.9" height="12.84" fill="#ccd9ed"/><rect x="50.5" width="13" height="12.84" fill="#b7cff9"/><rect x="63.2" width="12.9" height="12.84" fill="#abc8fd"/><rect x="75.8" width="25.6" height="12.84" fill="#b7cff9"/><rect x="101.1" width="12.9" height="12.84" fill="#b3cdfb"/><rect x="113.7" width="12.9" height="12.84" fill="#b7cff9"/><rect x="126.3" width="13" height="12.84" fill="#abc8fd"/><rect x="139" width="50.8" height="12.84" fill="#c1d4f4"/><rect x="189.5" width="12.9" height="12.84" fill="#b7cff9"/><rect x="202.1" width="13" height="12.84" fill="#b3cdfb"/><rect x="214.8" width="12.9" height="12.84" fill="#b7cff9"/><rect x="227.4" width="12.9" height="12.84" fill="#abc8fd"/><rect x="240" width="13" height="12.84" fill="#b3cdfb"/><rect x="252.7" width="25.5" height="12.84" fill="#b7cff9"/><rect x="277.9" width="13" height="12.84" fill="#abc8fd"/><rect x="290.6" width="25.5" height="12.84" fill="#b7cff9"/><rect x="315.8" width="12.9" height="12.84" fill="#bbd1f8"/><rect x="328.4" width="13" height="12.84" fill="#c1d4f4"/><rect x="341.1" width="25.5" height="12.84" fill="#abc8fd"/><rect x="366.3" width="13" height="12.84" fill="#b7cff9"/><rect x="379" width="12.9" height="12.84" fill="#c1d4f4"/><rect x="391.6" width="12.9" height="12.84" fill="#bbd1f8"/><rect x="404.2" width="13" height="12.84" fill="#afcafc"/><rect x="416.9" width="12.9" height="12.84" fill="#a3c2fe"/><rect x="429.5" width="25.6" height="12.84" fill="#b3cdfb"/><rect x="454.8" width="12.9" height="12.84" fill="#bbd1f8"/><rect x="467.4" width="12.9" height="12.84" fill="#b7cff9"/><rect x="480" width="13" height="12.84" fill="#afcafc"/><rect x="492.7" width="12.9" height="12.84" fill="#abc8fd"/><rect x="505.3" width="12.9" height="12.84" fill="#bbd1f8"/><rect x="517.9" width="13" height="12.84" fill="#9fbfff"/><rect x="530.6" width="12.9" height="12.84" fill="#abc8fd"/><rect x="543.2" width="12.9" height="12.84" fill="#afcafc"/><rect x="555.8" width="13" height="12.84" fill="#a3c2fe"/><rect x="568.5" width="12.9" height="12.84" fill="#afcafc"/><rect x="581.1" width="38.2" height="12.84" fill="#c1d4f4"/></g>
<g transform="translate(0 87.77)">
<rect x="0" width="12.9" height="12.84" fill="#afcafc"/><rect x="12.6" width="13" height="12.84" fill="#a3c2fe"/><rect x="25.3" width="12.9" height="12.84" fill="#9fbfff"/><rect x="37.9" width="12.9" height="12.84" fill="#afcafc"/><rect x="50.5" width="38.2" height="12.84" fill="#a7c5fe"/><rect x="88.4" width="13" height="12.84" fill="#9fbfff"/><rect x="101.1" width="12.9" height="12.84" fill="#b7cff9"/><rect x="113.7" width="12.9" height="12.84" fill="#9fbfff"/><rect x="126.3" width="13" height="12.84" fill="#b3cdfb"/><rect x="139" width="25.5" height="12.84" fill="#a7c5fe"/><rect x="164.2" width="13" height="12.84" fill="#b3cdfb"/><rect x="176.9" width="12.9" height="12.84" fill="#9fbfff"/><rect x="189.5" width="12.9" height="12.84" fill="#94b6ff"/><rect x="202.1" width="38.2" height="12.84" fill="#b7cff9"/><rect x="240" width="13" height="12.84" fill="#9fbfff"/><rect x="252.7" width="12.9" height="12.84" fill="#b7cff9"/><rect x="265.3" width="12.9" height="12.84" fill="#9fbfff"/><rect x="277.9" width="25.6" height="12.84" fill="#b7cff9"/><rect x="303.2" width="12.9" height="12.84" fill="#c1d4f4"/><rect x="315.8" width="12.9" height="12.84" fill="#9fbfff"/><rect x="328.4" width="13" height="12.84" fill="#abc8fd"/><rect x="341.1" width="12.9" height="12.84" fill="#b3cdfb"/><rect x="353.7" width="12.9" height="12.84" fill="#98b9ff"/><rect x="366.3" width="13" height="12.84" fill="#9fbfff"/><rect x="379" width="12.9" height="12.84" fill="#c5d6f2"/><rect x="391.6" width="12.9" height="12.84" fill="#b3cdfb"/><rect x="404.2" width="13" height="12.84" fill="#afcafc"/><rect x="416.9" width="12.9" height="12.84" fill="#abc8fd"/><rect x="429.5" width="12.9" height="12.84" fill="#b7cff9"/><rect x="442.1" width="13" height="12.84" fill="#afcafc"/><rect x="454.8" width="12.9" height="12.84" fill="#c1d4f4"/><rect x="467.4" width="12.9" height="12.84" fill="#b7cff9"/><rect x="480" width="25.6" height="12.84" fill="#c1d4f4"/><rect x="505.3" width="12.9" height="12.84" fill="#b3cdfb"/><rect x="517.9" width="13" height="12.84" fill="#c1d4f4"/><rect x="530.6" width="12.9" height="12.84" fill="#bed2f6"/><rect x="543.2" width="12.9" height="12.84" fill="#b7cff9"/><rect x="555.8" width="13" height="12.84" fill="#c1d4f4"/><rect x="568.5" width="12.9" height="12.84" fill="#b7cff9"/><rect x="581.1" width="12.9" height="12.84" fill="#c1d4f4"/><rect x="593.7" width="13" height="12.84" fill="#a3c2fe"/><rect x="606.4" width="12.9" height="12.84" fill="#bbd1f8"/></g>
<g transform="translate(0 100.31)">
<rect x="0" width="25.6" height="12.84" fill="#abc8fd"/><rect x="25.3" width="12.9" height="12.84" fill="#a7c5fe"/><rect x="37.9" width="12.9" height="12.84" fill="#c1d4f4"/><rect x="50.5" width="13" height="12.84" fill="#b7cff9"/><rect x="63.2" width="12.9" height="12.84" fill="#9fbfff"/><rect x="75.8" width="12.9" height="12.84" fill="#b3cdfb"/><rect x="88.4" width="38.2" height="12.84" fill="#b7cff9"/><rect x="126.3" width="13" height="12.84" fill="#abc8fd"/><rect x="139" width="12.9" height="12.84" fill="#9fbfff"/><rect x="151.6" width="12.9" height="12.84" fill="#abc8fd"/><rect x="164.2" width="13" height="12.84" fill="#b7cff9"/><rect x="176.9" width="38.2" height="12.84" fill="#ccd9ed"/><rect x="214.8" width="12.9" height="12.84" fill="#c1d4f4"/><rect x="227.4" width="12.9" height="12.84" fill="#b7cff9"/><rect x="240" width="13" height="12.84" fill="#9fbfff"/><rect x="252.7" width="12.9" height="12.84" fill="#b7cff9"/><rect x="265.3" width="38.2" height="12.84" fill="#abc8fd"/><rect x="303.2" width="12.9" height="12.84" fill="#b9d0f9"/><rect x="315.8" width="12.9" height="12.84" fill="#b2ccfb"/><rect x="328.4" width="13" height="12.84" fill="#c9d7f0"/><rect x="341.1" width="12.9" height="12.84" fill="#b6cefa"/><rect x="353.7" width="12.9" height="12.84" fill="#c9d7f0"/><rect x="366.3" width="13" height="12.84" fill="#bfd3f6"/><rect x="379" width="12.9" height="12.84" fill="#c5d6f2"/><rect x="391.6" width="25.6" height="12.84" fill="#cdd9ec"/><rect x="416.9" width="12.9" height="12.84" fill="#d6dce4"/><rect x="429.5" width="12.9" height="12.84" fill="#dadce0"/><rect x="442.1" width="13" height="12.84" fill="#d5dbe5"/><rect x="454.8" width="12.9" height="12.84" fill="#cfdaea"/><rect x="467.4" width="12.9" height="12.84" fill="#b3cdfb"/><rect x="480" width="13" height="12.84" fill="#c5d6f2"/><rect x="492.7" width="12.9" height="12.84" fill="#dadce0"/><rect x="505.3" width="12.9" height="12.84" fill="#bfd3f6"/><rect x="517.9" width="13" height="12.84" fill="#c9d7f0"/><rect x="530.6" width="12.9" height="12.84" fill="#dadce0"/><rect x="543.2" width="12.9" height="12.84" fill="#bfd3f6"/><rect x="555.8" width="25.6" height="12.84" fill="#bcd2f7"/><rect x="581.1" width="12.9" height="12.84" fill="#aec9fc"/><rect x="593.7" width="13" height="12.84" fill="#a2c1ff"/><rect x="606.4" width="12.9" height="12.84" fill="#a6c4fe"/></g>
<g transform="translate(0 112.85)">
<rect x="0" width="12.9" height="12.83" fill="#b7cff9"/><rect x="12.6" width="25.6" height="12.83" fill="#c1d4f4"/><rect x="37.9" width="12.9" height="12.83" fill="#bbd1f8"/><rect x="50.5" width="50.9" height="12.83" fill="#b7cff9"/><rect x="101.1" width="12.9" height="12.83" fill="#afcafc"/><rect x="113.7" width="25.6" height="12.83" fill="#bbd1f8"/><rect x="139" width="12.9" height="12.83" fill="#b3cdfb"/><rect x="151.6" width="12.9" height="12.83" fill="#b7cff9"/><rect x="164.2" width="13" height="12.83" fill="#c1d4f4"/><rect x="176.9" width="25.5" height="12.83" fill="#b7cff9"/><rect x="202.1" width="13" height="12.83" fill="#c1d4f4"/><rect x="214.8" width="12.9" height="12.83" fill="#bbd1f8"/><rect x="227.4" width="50.8" height="12.83" fill="#c1d4f4"/><rect x="277.9" width="13" height="12.83" fill="#bbd1f8"/><rect x="290.6" width="12.9" height="12.83" fill="#b7cff9"/><rect x="303.2" width="12.9" height="12.83" fill="#a9c6fd"/><rect x="315.8" width="12.9" height="12.83" fill="#b6cefa"/><rect x="328.4" width="13" height="12.83" fill="#9fbfff"/><rect x="341.1" width="12.9" height="12.83" fill="#85a8fc"/><rect x="353.7" width="12.9" height="12.83" fill="#b3cdfb"/><rect x="366.3" width="13" height="12.83" fill="#b9d0f9"/><rect x="379" width="12.9" height="12.83" fill="#88abfd"/><rect x="391.6" width="12.9" height="12.83" fill="#6f92f3"/><rect x="404.2" width="13" height="12.83" fill="#98b9ff"/><rect x="416.9" width="12.9" height="12.83" fill="#7a9df8"/><rect x="429.5" width="12.9" height="12.83" fill="#6384eb"/><rect x="442.1" width="13" height="12.83" fill="#8badfd"/><rect x="454.8" width="12.9" height="12.83" fill="#6384eb"/><rect x="467.4" width="12.9" height="12.83" fill="#7396f5"/><rect x="480" width="13" height="12.83" fill="#82a6fb"/><rect x="492.7" width="12.9" height="12.83" fill="#90b2fe"/><rect x="505.3" width="12.9" height="12.83" fill="#8db0fe"/><rect x="517.9" width="13" height="12.83" fill="#6c8ff1"/><rect x="530.6" width="12.9" height="12.83" fill="#85a8fc"/><rect x="543.2" width="12.9" height="12.83" fill="#81a4fb"/><rect x="555.8" width="13" height="12.83" fill="#5e7de7"/><rect x="568.5" width="12.9" height="12.83" fill="#6485ec"/><rect x="581.1" width="12.9" height="12.83" fill="#85a8fc"/><rect x="593.7" width="13" height="12.83" fill="#6a8bef"/><rect x="606.4" width="12.9" height="12.83" fill="#a9c6fd"/></g>
<g transform="translate(0 125.38)">
<rect x="0" width="12.9" height="12.84" fill="#b6cefa"/><rect x="12.6" width="13" height="12.84" fill="#c4d5f3"/><rect x="25.3" width="12.9" height="12.84" fill="#c7d7f0"/><rect x="37.9" width="25.6" height="12.84" fill="#bbd1f8"/><rect x="63.2" width="25.5" height="12.84" fill="#c4d5f3"/><rect x="88.4" width="25.6" height="12.84" fill="#cfdaea"/><rect x="113.7" width="12.9" height="12.84" fill="#c4d5f3"/><rect x="126.3" width="13" height="12.84" fill="#bbd1f8"/><rect x="139" width="12.9" height="12.84" fill="#c4d5f3"/><rect x="151.6" width="12.9" height="12.84" fill="#cbd8ee"/><rect x="164.2" width="13" height="12.84" fill="#cfdaea"/><rect x="176.9" width="12.9" height="12.84" fill="#e3d9d3"/><rect x="189.5" width="12.9" height="12.84" fill="#edd1c2"/><rect x="202.1" width="13" height="12.84" fill="#d5dbe5"/><rect x="214.8" width="25.5" height="12.84" fill="#c4d5f3"/><rect x="240" width="13" height="12.84" fill="#bbd1f8"/><rect x="252.7" width="12.9" height="12.84" fill="#b2ccfb"/><rect x="265.3" width="12.9" height="12.84" fill="#a9c6fd"/><rect x="277.9" width="13" height="12.84" fill="#b6cefa"/><rect x="290.6" width="12.9" height="12.84" fill="#c7d7f0"/><rect x="303.2" width="12.9" height="12.84" fill="#cbd8ee"/><rect x="315.8" width="12.9" height="12.84" fill="#d3dbe7"/><rect x="328.4" width="13" height="12.84" fill="#d9dce1"/><rect x="341.1" width="12.9" height="12.84" fill="#d5dbe5"/><rect x="353.7" width="12.9" height="12.84" fill="#f2cbb7"/><rect x="366.3" width="13" height="12.84" fill="#f7b194"/><rect x="379" width="12.9" height="12.84" fill="#b9d0f9"/><rect x="391.6" width="12.9" height="12.84" fill="#506bda"/><rect x="404.2" width="13" height="12.84" fill="#7295f4"/><rect x="416.9" width="12.9" height="12.84" fill="#6384eb"/><rect x="429.5" width="12.9" height="12.84" fill="#4a63d3"/><rect x="442.1" width="13" height="12.84" fill="#799cf8"/><rect x="454.8" width="12.9" height="12.84" fill="#5a78e4"/><rect x="467.4" width="12.9" height="12.84" fill="#6485ec"/><rect x="480" width="25.6" height="12.84" fill="#89acfd"/><rect x="505.3" width="12.9" height="12.84" fill="#799cf8"/><rect x="517.9" width="25.6" height="12.84" fill="#7b9ff9"/><rect x="543.2" width="12.9" height="12.84" fill="#6b8df0"/><rect x="555.8" width="13" height="12.84" fill="#6485ec"/><rect x="568.5" width="12.9" height="12.84" fill="#6282ea"/><rect x="581.1" width="12.9" height="12.84" fill="#5d7ce6"/><rect x="593.7" width="13" height="12.84" fill="#4a63d3"/><rect x="606.4" width="12.9" height="12.84" fill="#6f92f3"/></g>
<g transform="translate(0 137.92)">
<rect x="0" width="12.9" height="12.84" fill="#88abfd"/><rect x="12.6" width="13" height="12.84" fill="#7b9ff9"/><rect x="25.3" width="12.9" height="12.84" fill="#5b7ae5"/><rect x="37.9" width="12.9" height="12.84" fill="#506bda"/><rect x="50.5" width="13" height="12.84" fill="#85a8fc"/><rect x="63.2" width="12.9" height="12.84" fill="#5673e0"/><rect x="75.8" width="12.9" height="12.84" fill="#6180e9"/><rect x="88.4" width="13" height="12.84" fill="#5875e1"/><rect x="101.1" width="12.9" height="12.84" fill="#516ddb"/><rect x="113.7" width="12.9" height="12.84" fill="#4961d2"/><rect x="126.3" width="13" height="12.84" fill="#5b7ae5"/><rect x="139" width="12.9" height="12.84" fill="#7b9ff9"/><rect x="151.6" width="12.9" height="12.84" fill="#8badfd"/><rect x="164.2" width="25.6" height="12.84" fill="#688aef"/><rect x="189.5" width="12.9" height="12.84" fill="#7093f3"/><rect x="202.1" width="13" height="12.84" fill="#7da0f9"/><rect x="214.8" width="12.9" height="12.84" fill="#688aef"/><rect x="227.4" width="12.9" height="12.84" fill="#6687ed"/><rect x="240" width="13" height="12.84" fill="#6485ec"/><rect x="252.7" width="12.9" height="12.84" fill="#6282ea"/><rect x="265.3" width="12.9" height="12.84" fill="#5f7fe8"/><rect x="277.9" width="25.6" height="12.84" fill="#5977e3"/><rect x="303.2" width="12.9" height="12.84" fill="#5470de"/><rect x="315.8" width="12.9" height="12.84" fill="#5977e3"/><rect x="328.4" width="13" height="12.84" fill="#3b4cc0"/><rect x="341.1" width="12.9" height="12.84" fill="#465ecf"/><rect x="353.7" width="12.9" height="12.84" fill="#85a8fc"/><rect x="366.3" width="13" height="12.84" fill="#7da0f9"/><rect x="379" width="12.9" height="12.84" fill="#5875e1"/><rect x="391.6" width="12.9" height="12.84" fill="#8db0fe"/><rect x="404.2" width="13" height="12.84" fill="#aec9fc"/><rect x="416.9" width="12.9" height="12.84" fill="#aac7fd"/><rect x="429.5" width="12.9" height="12.84" fill="#a6c4fe"/><rect x="442.1" width="13" height="12.84" fill="#cfdaea"/><rect x="454.8" width="12.9" height="12.84" fill="#aac7fd"/><rect x="467.4" width="12.9" height="12.84" fill="#bcd2f7"/><rect x="480" width="13" height="12.84" fill="#ead4c8"/><rect x="492.7" width="12.9" height="12.84" fill="#dadce0"/><rect x="505.3" width="12.9" height="12.84" fill="#dedcdb"/><rect x="517.9" width="13" height="12.84" fill="#d8dce2"/><rect x="530.6" width="12.9" height="12.84" fill="#b9d0f9"/><rect x="543.2" width="12.9" height="12.84" fill="#a6c4fe"/><rect x="555.8" width="13" height="12.84" fill="#9ebeff"/><rect x="568.5" width="12.9" height="12.84" fill="#97b8ff"/><rect x="581.1" width="12.9" height="12.84" fill="#7396f5"/><rect x="593.7" width="13" height="12.84" fill="#3f53c6"/><rect x="606.4" width="12.9" height="12.84" fill="#6c8ff1"/></g>
<g transform="translate(0 150.46)">
<rect x="0" width="12.9" height="12.84" fill="#e1dad6"/><rect x="12.6" width="13" height="12.84" fill="#d3dbe7"/><rect x="25.3" width="12.9" height="12.84" fill="#d4dbe6"/><rect x="37.9" width="12.9" height="12.84" fill="#d3dbe7"/><rect x="50.5" width="13" height="12.84" fill="#d1dae9"/><rect x="63.2" width="12.9" height="12.84" fill="#d3dbe7"/><rect x="75.8" width="12.9" height="12.84" fill="#d4dbe6"/><rect x="88.4" width="13" height="12.84" fill="#cedaeb"/><rect x="101.1" width="12.9" height="12.84" fill="#cfdaea"/><rect x="113.7" width="12.9" height="12.84" fill="#d1dae9"/><rect x="126.3" width="13" height="12.84" fill="#d2dbe8"/><rect x="139" width="12.9" height="12.84" fill="#d3dbe7"/><rect x="151.6" width="12.9" height="12.84" fill="#d1dae9"/><rect x="164.2" width="13" height="12.84" fill="#d3dbe7"/><rect x="176.9" width="12.9" height="12.84" fill="#dddcdc"/><rect x="189.5" width="12.9" height="12.84" fill="#e2dad5"/><rect x="202.1" width="13" height="12.84" fill="#dddcdc"/><rect x="214.8" width="12.9" height="12.84" fill="#d3dbe7"/><rect x="227.4" width="12.9" height="12.84" fill="#cdd9ec"/><rect x="240" width="13" height="12.84" fill="#d3dbe7"/><rect x="252.7" width="12.9" height="12.84" fill="#ccd9ed"/><rect x="265.3" width="12.9" height="12.84" fill="#d2dbe8"/><rect x="277.9" width="13" height="12.84" fill="#cedaeb"/><rect x="290.6" width="12.9" height="12.84" fill="#d1dae9"/><rect x="303.2" width="12.9" height="12.84" fill="#d3dbe7"/><rect x="315.8" width="12.9" height="12.84" fill="#d5dbe5"/><rect x="328.4" width="13" height="12.84" fill="#dcdddd"/><rect x="341.1" width="12.9" height="12.84" fill="#d8dce2"/><rect x="353.7" width="12.9" height="12.84" fill="#e4d9d2"/><rect x="366.3" width="13" height="12.84" fill="#e3d9d3"/><rect x="379" width="12.9" height="12.84" fill="#dfdbd9"/><rect x="391.6" width="12.9" height="12.84" fill="#d55042"/><rect x="404.2" width="38.2" height="12.84" fill="#b40426"/><rect x="442.1" width="13" height="12.84" fill="#b8122a"/><rect x="454.8" width="12.9" height="12.84" fill="#ba162b"/><rect x="467.4" width="12.9" height="12.84" fill="#c43032"/><rect x="480" width="13" height="12.84" fill="#dd5f4b"/><rect x="492.7" width="12.9" height="12.84" fill="#e0654f"/><rect x="505.3" width="12.9" height="12.84" fill="#e46e56"/><rect x="517.9" width="13" height="12.84" fill="#e9785d"/><rect x="530.6" width="12.9" height="12.84" fill="#ea7b60"/><rect x="543.2" width="12.9" height="12.84" fill="#ed8366"/><rect x="555.8" width="13" height="12.84" fill="#f08b6e"/><rect x="568.5" width="12.9" height="12.84" fill="#f39475"/><rect x="581.1" width="12.9" height="12.84" fill="#f5a081"/><rect x="593.7" width="13" height="12.84" fill="#ee8468"/><rect x="606.4" width="12.9" height="12.84" fill="#f39778"/></g>
</svg>
<div class="abs h3" style="left:798px;top:741.8px;letter-spacing:0.568px">Processed features</div>
<svg class="abs copyic" style="left:983.8px;top:741px" width="19" height="21" viewBox="0 0 22 25" fill="none" stroke="#ced4da" stroke-width="2.1" stroke-linejoin="round">
  <path d="M7 5.6 V2.4 H15.2 L19.4 6.6 V18.6 H7 V5.6 M13.8 2.6 V8 H19.2"/><path d="M7 5.8 H2.4 V22.4 H14 V18.8"/>
</svg>
<div class="abs hr" style="left:768px;top:776.5px;width:678px"></div>
<div class="abs mono" style="left:797.5px;top:810px">-0.4891, 0.4698, 0.2882, 0.5269, -0.5578, 0.3063, -0.2361, -0.1199,…</div>
<!--MAIN-END-->
</div>
<div id="mainscroll" class="abs">

<div class="abs" style="left:2px;top:60px;width:11px;height:378px;background:#a8a8a8"></div>
<svg class="abs" style="left:0;top:0" width="15" height="834" viewBox="0 0 15 834"><path d="M3.9 10 L7.5 6.2 L11.1 10 Z" fill="#505050"/><path d="M3.9 823.8 L7.5 827.8 L11.1 823.8 Z" fill="#505050"/></svg>

</div>

<!-- WINDOW CHROME -->
<div id="titlebar" class="abs">MFCC - dhruvsheth12345-project-1 - Edge Impulse - Chromium</div>
<div id="tabstrip" class="abs">

<svg class="abs" style="left:0;top:0" width="300" height="35" viewBox="0 28 300 35">
  <path d="M0 61.5 C6 61.5 8.2 58 8.2 53 V36 C8.2 31.5 11 29 16 29 H240 C245 29 247.6 31.5 247.6 36 V53 C247.6 58 250 61.5 256 61.5 V63 H0 Z" fill="#f0f0f0"/>
  <path d="M0 61.5 C6 61.5 8.2 58 8.2 53 V36 C8.2 31.5 11 29 16 29 H240 C245 29 247.6 31.5 247.6 36 V53 C247.6 58 250 61.5 256 61.5" fill="none" stroke="#a3a3a3" stroke-width="1"/>
  <!-- favicon -->
  <g>
    <path d="M22 39.8 H31.4 L32 41.8 H22 Z" fill="#3bb8cf"/><circle cx="22" cy="40.8" r="1.5" fill="#3bb8cf"/>
    <rect x="20.8" y="43.6" width="7" height="2.2" rx="1.1" fill="#95c11f"/>
    <path d="M29.6 43.6 H33 L33.6 45.8 H29.6 A1.1 1.1 0 0 1 29.6 43.6Z" fill="#fbb615"/>
    <path d="M22 47.6 H34.6 L35.2 49.6 H22 Z" fill="#f4512c"/><circle cx="22" cy="48.6" r="1.5" fill="#f4512c"/>
  </g>
  <!-- close -->
  <path d="M228.4 41.4 L236 49 M236 41.4 L228.4 49" stroke="#3a3a3a" stroke-width="1.7" fill="none"/>
  <!-- plus -->
  <path d="M264 45 H275.8 M269.9 39.1 V50.9" stroke="#202020" stroke-width="2" fill="none"/>
</svg>
<div class="abs" style="left:44px;top:7px;width:178px;height:22px;overflow:hidden;font-size:15.5px;letter-spacing:0px;color:#3c4043;line-height:22px;white-space:nowrap;-webkit-mask-image:linear-gradient(90deg,#000 0,#000 150px,transparent 178px);mask-image:linear-gradient(90deg,#000 0,#000 150px,transparent 178px)">MFCC - dhruvsheth12345-project-1 - Edge Impulse</div>
<!--TABSTRIP-END-->
</div>
<div id="toolbar" class="abs"></div>
<div id="urlpill" class="abs"></div>

<svg class="abs" style="left:0;top:62px" width="1824" height="37" viewBox="0 62 1824 37">
  <!-- back -->
  <path d="M29 80 H16.6 M22.4 73.8 L16.2 80 L22.4 86.2" stroke="#222" stroke-width="1.9" fill="none"/>
  <!-- forward -->
  <path d="M47.2 80 H59.6 M53.8 73.8 L60 80 L53.8 86.2" stroke="#9c9c9c" stroke-width="1.9" fill="none"/>
  <!-- reload -->
  <path d="M91.2 76.2 A6.2 6.2 0 1 0 92.2 81.6" stroke="#222" stroke-width="2" fill="none"/>
  <path d="M93 73.4 V79 H87.4 Z" fill="#222"/>
  <!-- lock -->
  <rect x="121.8" y="78" width="8.6" height="7" rx="1" fill="#5f6368"/>
  <path d="M123.8 78.4 V76.6 A2.3 2.3 0 0 1 128.4 76.6 V78.4" stroke="#5f6368" stroke-width="1.4" fill="none"/>
  <!-- zoom -->
  <circle cx="1619.8" cy="78.2" r="4.8" stroke="#5f6368" stroke-width="1.5" fill="none"/>
  <path d="M1623.4 81.8 L1627.4 85.8" stroke="#5f6368" stroke-width="1.7"/>
  <path d="M1617.4 78.2 H1622.2 M1619.8 75.8 V80.6" stroke="#5f6368" stroke-width="1.1"/>
  <!-- star -->
  <path d="M1653 74.4 L1654.9 78.6 L1659.4 79 L1656 82 L1657 86.4 L1653 84 L1649 86.4 L1650 82 L1646.6 79 L1651.1 78.6 Z" stroke="#5f6368" stroke-width="1.4" fill="none" stroke-linejoin="round"/>
  <!-- h ext -->
  <rect x="1685" y="72" width="15" height="14.8" rx="0.8" fill="#1f1f1f"/>
  <!-- ublock -->
  <path d="M1725 72 C1727.4 73.4 1729.8 74 1732.2 74.2 V80 C1732.2 84 1728.6 86.6 1725 87.6 C1721.4 86.6 1717.8 84 1717.8 80 V74.2 C1720.2 74 1722.6 73.4 1725 72 Z" fill="#800d0d"/>
  <rect x="1727.2" y="82" width="11.8" height="11.8" rx="1.6" fill="#676767"/>
  <!-- sep -->
  <rect x="1747" y="72" width="1" height="15.6" fill="#c6c6c6"/>
  <!-- avatar -->
  <clipPath id="avc"><circle cx="1770" cy="79.9" r="9.6"/></clipPath>
  <g clip-path="url(#avc)"><rect x="1760" y="70" width="20" height="20" fill="#fcfcfc"/><rect x="1760" y="70" width="20" height="1.2" fill="#e9a35a"/><rect x="1760" y="71" width="20" height="2.9" fill="#3d2a20"/><rect x="1760" y="85.2" width="20" height="5" fill="#eba45c"/><rect x="1767.4" y="76" width="3.4" height="3" rx="1.4" fill="#c9a8ec"/><rect x="1770.6" y="76.2" width="3.6" height="2.6" rx="1.2" fill="#f3b6c8"/><rect x="1764.2" y="80.3" width="13" height="1.3" fill="#8f8f93"/><rect x="1762" y="82.5" width="16" height="0.8" fill="#d8e6f5"/></g>
  <!-- menu -->
  <circle cx="1802.4" cy="75.4" r="1.7" fill="#222"/><circle cx="1802.4" cy="80.5" r="1.7" fill="#222"/><circle cx="1802.4" cy="85.5" r="1.7" fill="#222"/>
</svg>
<div class="abs" style="left:142.3px;top:70px;font-size:15px;letter-spacing:-0.56px;line-height:20px;color:#26292c;white-space:nowrap">studio.edgeimpulse.com<span style="color:#80868b;letter-spacing:0.11px">/studio/6021/dsp/mfcc/9</span></div>
<div class="abs" style="left:1688.8px;top:72px;font-family:'Liberation Serif',serif;font-style:italic;font-size:15.5px;line-height:16px;color:#e02020;-webkit-text-stroke:0.3px #e02020">h</div>
<div class="abs" style="left:1720.5px;top:74.4px;font-size:8px;font-weight:bold;line-height:9px;color:#fff;letter-spacing:-0.5px">uo</div>
<div class="abs" style="left:1730.8px;top:83px;font-size:9px;line-height:10px;color:#fff">1</div>
<!-- window controls -->
<svg class="abs" style="left:1750px;top:4px" width="70" height="20" viewBox="1750 4 70 20" fill="none" stroke="#fff" stroke-width="2.1">
  <path d="M1758.6 12.2 L1762.2 15.8 L1765.8 12.2"/>
  <rect x="1783" y="10.9" width="6.2" height="6.2"/>
  <path d="M1806.4 10.4 L1813.6 17.6 M1813.6 10.4 L1806.4 17.6"/>
</svg>
<!--TOOLBAR-END-->

<!-- TASKBAR -->
<div id="taskbar" class="abs">

<div class="abs" style="left:246px;top:0.3px;width:200px;height:50px;background:#cbc9c5;border-radius:3px 3px 0 0"></div>
<svg class="abs" style="left:0;top:0" width="460" height="50" viewBox="0 934 460 50">
  <defs>
    <linearGradient id="rg" x1="0" y1="0" x2="1" y2="1"><stop offset="0.5" stop-color="#f6f6f6"/><stop offset="0.5" stop-color="#e1e1e1"/></linearGradient>
    <linearGradient id="gg" x1="0" y1="0" x2="1" y2="1"><stop offset="0.55" stop-color="#7fb0ea"/><stop offset="0.55" stop-color="#72a3dc"/></linearGradient>
  </defs>
  <!-- raspberry -->
  <circle cx="30" cy="959" r="23.6" fill="url(#rg)" stroke="#b4b4b4" stroke-width="0.8"/>
  <path d="M29.6 952 C26 951.6 19.4 949.4 17.4 942.6 C22.4 941 28.2 943.4 29.6 952 Z M30.6 952 C34.2 951.6 40.8 949.4 42.8 942.6 C37.8 941 32 943.4 30.6 952 Z" fill="#75a928" stroke="#111" stroke-width="1"/>
  <path d="M30.1 951.4 C35 950.6 40 953 41 957.4 C44.8 960 44.6 966 41.6 968.6 C41.2 973 36 977 30.1 977.2 C24.2 977 19 973 18.6 968.6 C15.6 966 15.4 960 19.2 957.4 C20.2 953 25.2 950.6 30.1 951.4 Z" fill="#c51a4a" stroke="#111" stroke-width="1.1"/>
  <g fill="none" stroke="#111" stroke-width="0.9"><circle cx="30.1" cy="956.6" r="3"/><circle cx="23.8" cy="959.6" r="3"/><circle cx="36.4" cy="959.6" r="3"/><circle cx="30.1" cy="964" r="3.4"/><circle cx="22.4" cy="966.6" r="2.8"/><circle cx="37.8" cy="966.6" r="2.8"/><circle cx="30.1" cy="972" r="3.2"/></g>
  <!-- globe -->
  <circle cx="92.5" cy="959" r="24.2" fill="url(#gg)" stroke="#5d8cc5" stroke-width="0.8"/>
  <g fill="none" stroke="#d5e6fa" stroke-width="0.9"><path d="M92.5 935 V983"/><path d="M69.5 951.4 H115.5 M69.5 966 H115.5"/><path d="M85.6 935.8 C76 948 76 970 85.6 982.2 M99.4 935.8 C109 948 109 970 99.4 982.2"/></g>
  <!-- folders -->
  <path d="M126.4 936.6 H134.4 L137.6 940.6 H164.2 A1 1 0 0 1 165.2 941.6 V968.4 A1 1 0 0 1 164.2 969.4 H126.4 A1 1 0 0 1 125.4 968.4 V937.6 A1 1 0 0 1 126.4 936.6 Z" fill="#f8e4a2" stroke="#e6cf8a" stroke-width="0.8"/>
  <path d="M137.1 947.6 H145.1 L148.3 951.6 H174.9 A1 1 0 0 1 175.9 952.6 V979.4 A1 1 0 0 1 174.9 980.4 H137.1 A1 1 0 0 1 136.1 979.4 V948.6 A1 1 0 0 1 137.1 947.6 Z" fill="#f9e5a3" stroke="#e6cf8a" stroke-width="0.8"/>
  <!-- terminal -->
  <rect x="184.2" y="938.4" width="48.4" height="42.4" rx="2" fill="#626262"/>
  <path d="M186.2 938.4 H230.6 A2 2 0 0 1 232.6 940.4 V946.2 H184.2 V940.4 A2 2 0 0 1 186.2 938.4 Z" fill="#6a82eb"/>
  <path d="M195 956 L207 962 L195 968" fill="none" stroke="#fff" stroke-width="1.8"/><path d="M208 969.4 H222" stroke="#fff" stroke-width="1.8"/>
  <!-- chromium -->
  <g>
    <clipPath id="cc"><circle cx="273.4" cy="958.9" r="23"/></clipPath>
    <g clip-path="url(#cc)">
      <rect x="250" y="935" width="48" height="48" fill="#6a9cf2"/>
      <path d="M273.4 958.9 L253 946 L253 934 H297 V950 L273.4 950 Z" fill="#3f6fd9"/>
      <path d="M273.4 958.9 L281 950 H298 V984 H262 Z" fill="#9fbdf9"/>
    </g>
    <circle cx="273.4" cy="958.9" r="10.8" fill="#fff"/><circle cx="273.4" cy="958.9" r="8.7" fill="#4c8bf5"/>
  </g>
</svg>
<div class="abs" style="left:300.6px;top:16px;font-size:16px;letter-spacing:-0.42px;line-height:20px;color:#1a1a1a;white-space:nowrap">MFCC - dhruvshet...</div>
<svg class="abs" style="left:1600px;top:0" width="170" height="50" viewBox="1600 934 170 50" fill="none">
  <!-- bluetooth -->
  <path d="M1615.8 948.6 L1634.6 967.8 L1625.3 977 V941.4 L1634.6 950.2 L1615.8 968.8" stroke="#0b7bff" stroke-width="2.7" stroke-linejoin="miter" stroke-miterlimit="10"/>
  <!-- wifi -->
  <g stroke="#1ba4ff" stroke-width="3.8">
    <path d="M1661.14 951.24 A27.8 27.8 0 0 1 1700.46 951.24"/>
    <path d="M1667.65 957.75 A18.6 18.6 0 0 1 1693.95 957.75"/>
    <path d="M1673.66 963.76 A10.1 10.1 0 0 1 1687.94 963.76"/>
    <circle cx="1680.8" cy="970.9" r="4" stroke-width="4.1"/>
  </g>
  <!-- volume -->
  <path d="M1716 954 H1722 L1733.4 945.4 H1734.6 V972.6 H1733.4 L1722 964 H1716 Z" fill="#63c5ff" stroke="#63c5ff" stroke-width="1" stroke-linejoin="round"/>
  <g stroke="#63c5ff" stroke-width="1.5">
    <path d="M1738.6 952.4 A9.4 9.4 0 0 1 1738.6 965.8"/>
    <path d="M1742.6 948.4 A15 15 0 0 1 1742.6 969.8"/>
    <path d="M1746.6 944.4 A20.6 20.6 0 0 1 1746.6 973.8"/>
  </g>
</svg>
<div class="abs" style="left:1772.6px;top:16px;font-size:16px;letter-spacing:-0.6px;line-height:20px;color:#1a1a1a;white-space:nowrap">17:17</div>
<!--TASKBAR-END-->
</div>

</div>
</body>
</html>
